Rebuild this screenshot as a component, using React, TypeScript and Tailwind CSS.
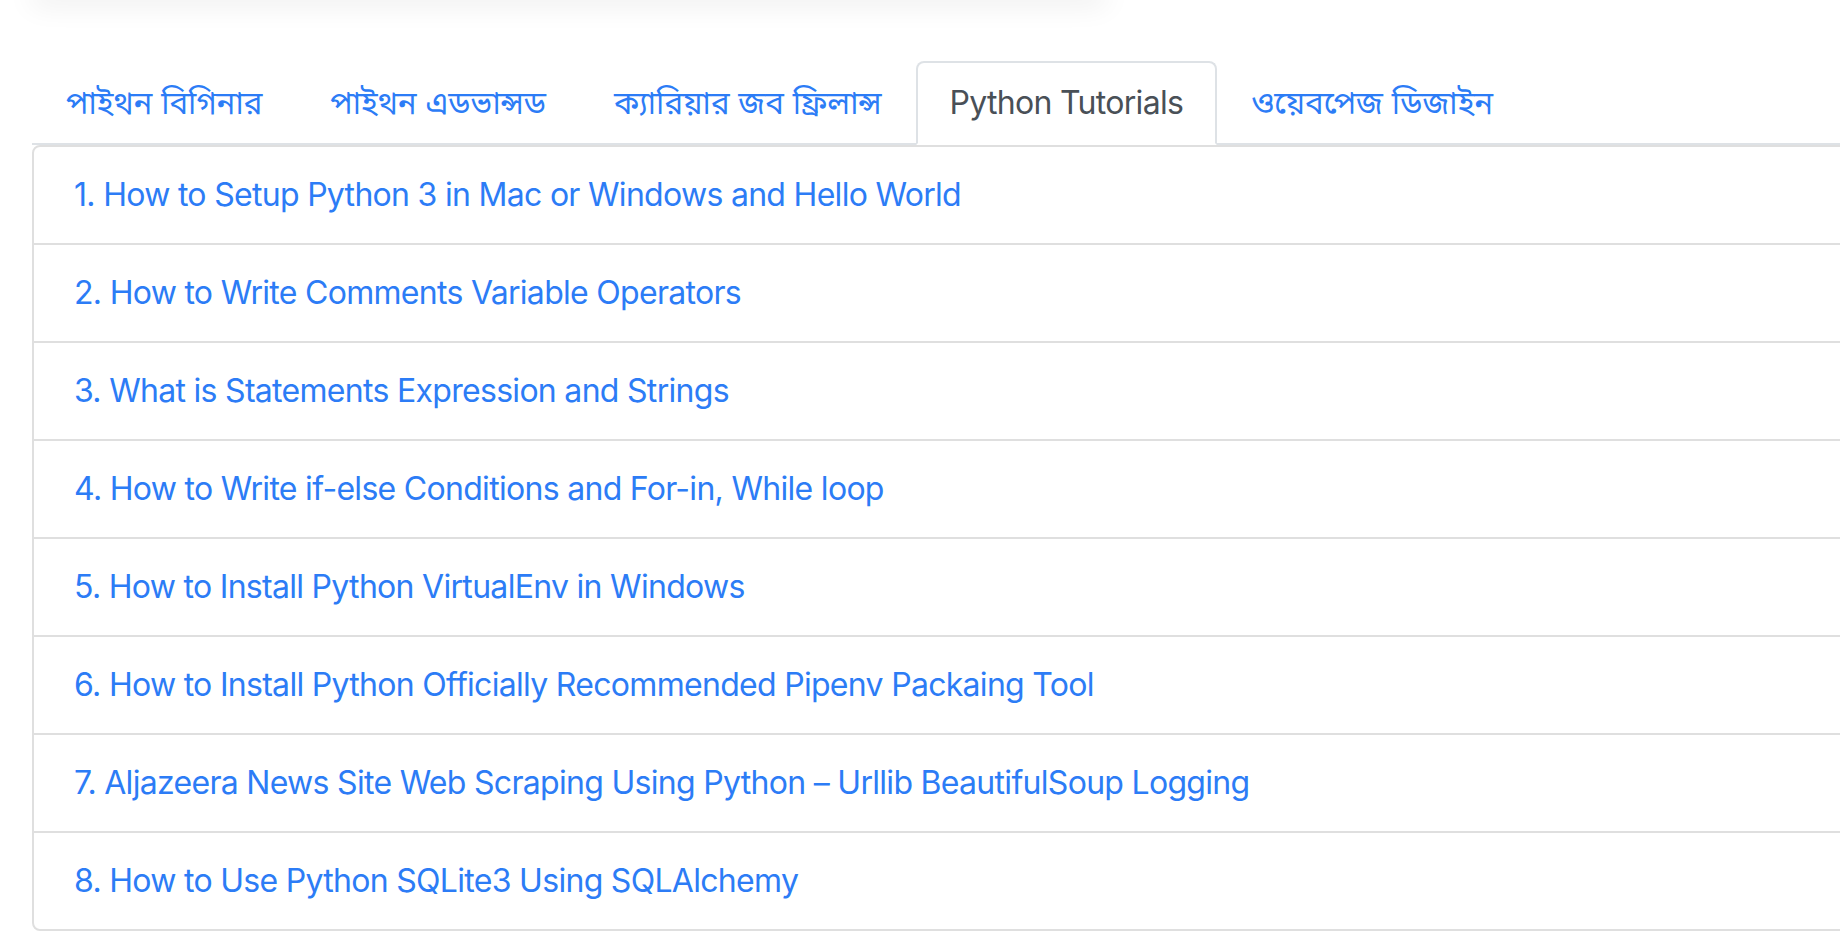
const tabs = [
  { label: "পাইথন বিগিনার", active: false },
  { label: "পাইথন এডভান্সড", active: false },
  { label: "ক্যারিয়ার জব ফ্রিলান্স", active: false },
  { label: "Python Tutorials", active: true },
  { label: "ওয়েবপেজ ডিজাইন", active: false },
];

const lessons = [
  "1. How to Setup Python 3 in Mac or Windows and Hello World",
  "2. How to Write Comments Variable Operators",
  "3. What is Statements Expression and Strings",
  "4. How to Write if-else Conditions and For-in, While loop",
  "5. How to Install Python VirtualEnv in Windows",
  "6. How to Install Python Officially Recommended Pipenv Packaing Tool",
  "7. Aljazeera News Site Web Scraping Using Python – Urllib BeautifulSoup Logging",
  "8. How to Use Python SQLite3 Using SQLAlchemy",
];

const font =
  "font-['Inter','Noto_Sans_Bengali','Noto_Serif_Bengali','Lohit_Bengali','Noto_Sans',sans-serif]";

export default function App() {
  return (
    <div className={`w-[1840px] h-[948px] overflow-hidden bg-white ${font}`}>
      {/* card above, only its shadow shows */}
      <div className="ml-[29px] w-[1080px] h-[20px] -mt-[20px] rounded-[16px] bg-white shadow-[0_6px_28px_rgba(0,0,0,0.07)]" />

      <div className="mt-[61px] ml-[32px] w-[1900px]">
        {/* tabs */}
        <ul className="flex border-b-2 border-[#dee2e6]">
          {tabs.map((t) => (
            <li key={t.label} className="-mb-[2px]">
              <a
                className={
                  t.active
                    ? "block px-[32px] py-[16px] text-[32px] leading-[48px] tracking-[-0.7px] text-[#495057] bg-white border-2 border-[#dee2e6] border-b-white rounded-t-[8px]"
                    : "block px-[32px] py-[16px] text-[31.25px] leading-[48px] text-[#2c7cf6] border-2 border-transparent rounded-t-[8px]"
                }
              >
                {t.label}
              </a>
            </li>
          ))}
        </ul>

        {/* lesson list */}
        <ul className="flex flex-col border-2 border-[#dfdfdf] rounded-[8px]">
          {lessons.map((l, i) => (
            <li
              key={l}
              className={
                i === lessons.length - 1
                  ? "px-[40px] py-[24px] text-[32px] leading-[48px] tracking-[-0.7px] text-[#2c7cf6]"
                  : "px-[40px] py-[24px] text-[32px] leading-[48px] tracking-[-0.7px] text-[#2c7cf6] border-b-2 border-[#dfdfdf]"
              }
            >
              {l}
            </li>
          ))}
        </ul>
      </div>
    </div>
  );
}
